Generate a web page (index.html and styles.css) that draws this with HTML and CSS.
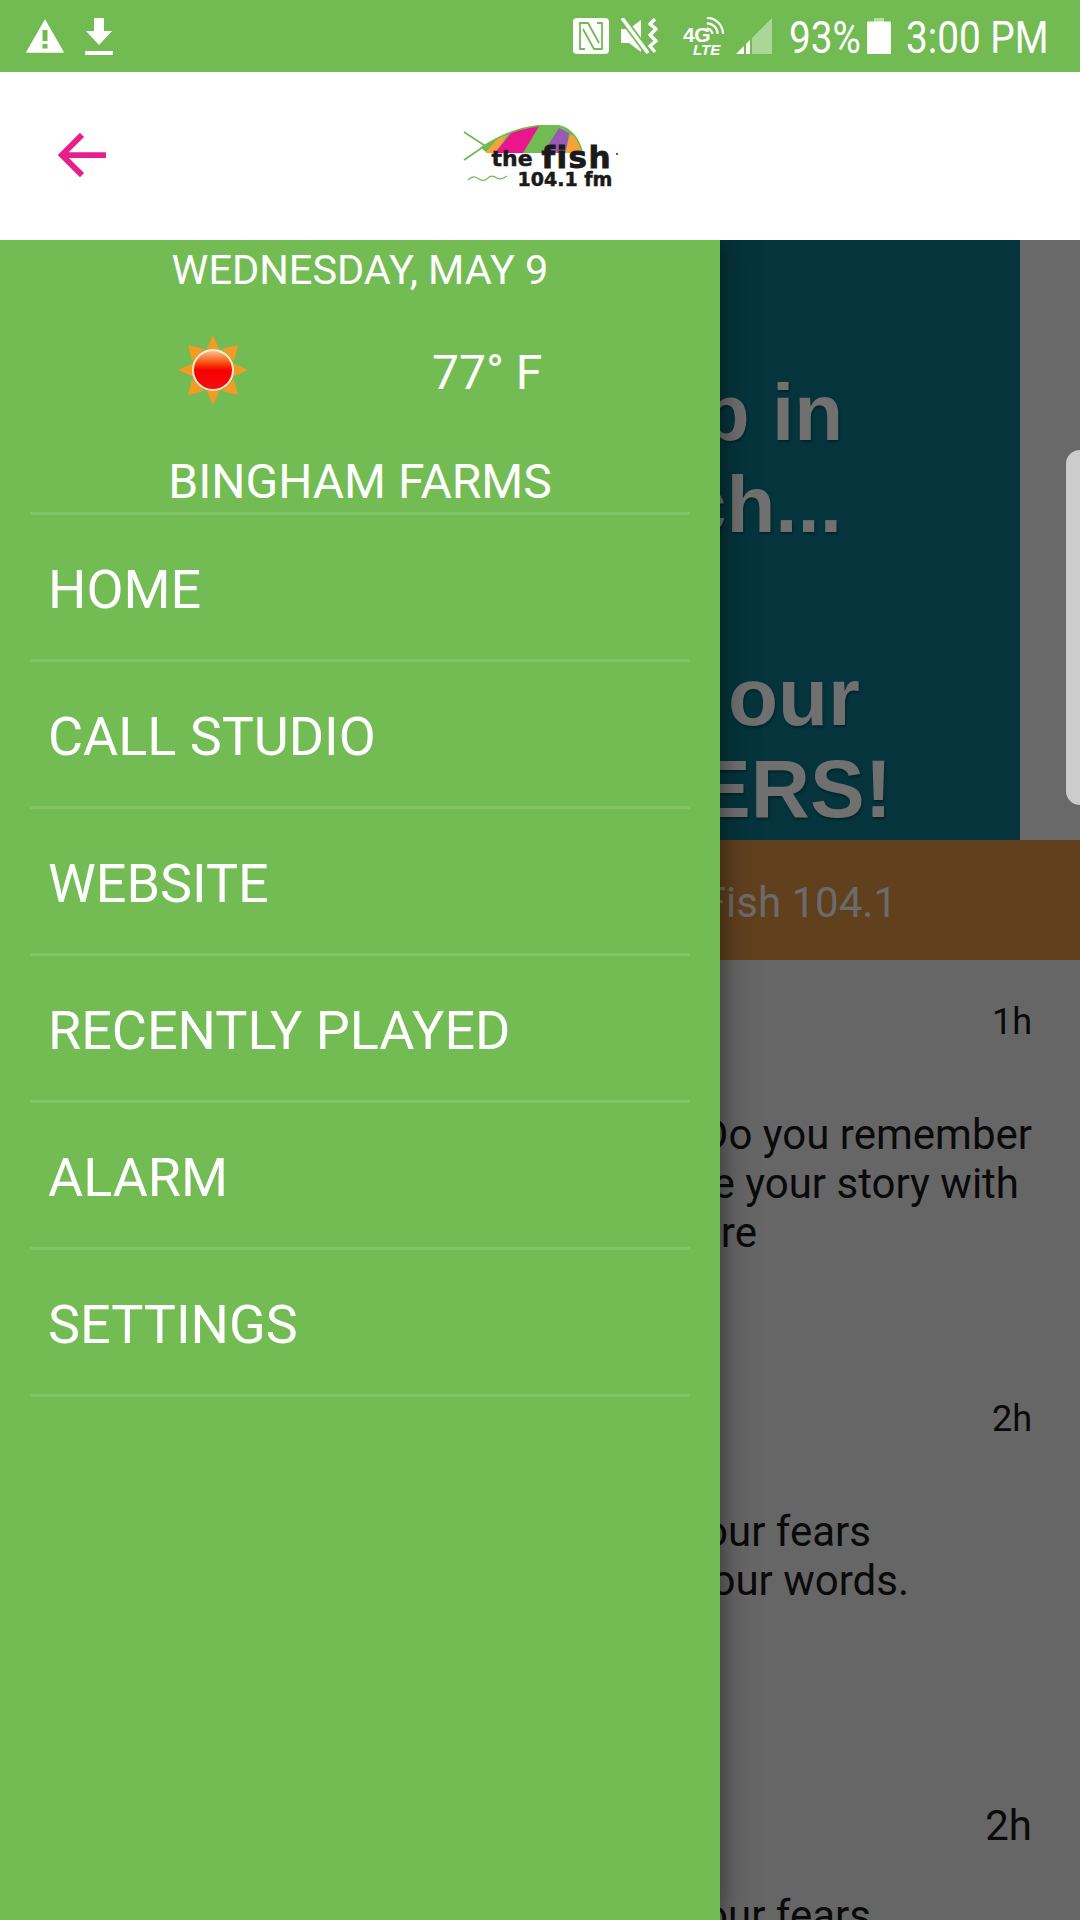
FILE: index.html
```html
<!DOCTYPE html>
<html lang="en">
<head>
<meta charset="utf-8">
<title>The Fish 104.1</title>
<link rel="stylesheet" href="styles.css">
</head>
<body>
<div class="phone">
  <header class="status">
    <div class="status-left">
      <svg class="ic-warn" viewBox="0 0 38 34"><path d="M19 1.5 L37 33 H1 Z" fill="#fff" stroke="#fff" stroke-width="1.5" stroke-linejoin="round"/><rect x="16.5" y="11" width="5" height="11" fill="#72bb53"/><rect x="16.5" y="25" width="5" height="4.5" fill="#72bb53"/></svg>
      <svg class="ic-dl" viewBox="0 0 28 37"><path d="M9 0h10v13h8L14 27 1 13h8z" fill="#fff"/><rect x="0" y="33" width="28" height="4" fill="#fff"/></svg>
    </div>
    <div class="status-right">
      <svg class="ic-nfc" viewBox="0 0 36 36"><rect width="36" height="36" rx="4" fill="#fff"/><path d="M12 31H7V5h8l11 20M24 5h5v26h-8L10 11" fill="none" stroke="#72bb53" stroke-width="1.8"/></svg>
      <svg class="ic-mute" viewBox="0 0 38 36"><path d="M0 11h8L20 2v32L8 25H0z" fill="#fff"/><path d="M1 0 L27 35" stroke="#72bb53" stroke-width="7"/><path d="M1 0 L27 35" stroke="#fff" stroke-width="3.6"/><path d="M34 1 l-5 5 6 5 -6 6 6 6 -6 5 5 6" fill="none" stroke="#fff" stroke-width="3.4" stroke-linejoin="round"/></svg>
      <div class="net">
        <svg class="ic-arcs" viewBox="0 0 20 20"><path d="M1 1 A18 18 0 0 1 19 19M1 7 A12 12 0 0 1 13 19M1 13 A6 6 0 0 1 7 19" fill="none" stroke="#fff" stroke-width="2.4"/></svg>
        <span class="net-4g">4G</span><span class="net-lte">LTE</span>
      </div>
      <svg class="ic-signal" viewBox="0 0 36 36"><path d="M16 20 36 0V36H16z" fill="#fff" fill-opacity=".4"/><path d="M0 36 8 28V36zM10 26 14 22V36H10z" fill="#fff"/></svg>
      <span class="status-text pct">93%</span>
      <svg class="ic-batt" viewBox="0 0 24 36"><path d="M7 0h10v4H7z" fill="#fff" fill-opacity=".5"/><rect y="3.5" width="24" height="32.5" rx="1" fill="#fff"/></svg>
      <span class="status-text clock">3:00 PM</span>
    </div>
  </header>
  <div class="appbar">
    <svg class="ic-back" viewBox="0 0 50 48"><path d="M50 24H5M25 3 4 24l21 21" fill="none" stroke="#e91e8c" stroke-width="6"/></svg>
    <div class="logo">
      <svg class="fish" viewBox="0 0 155 62">
        <defs><clipPath id="body"><path d="M18 23C40 8 64 0 88 0c16 0 26 9 31 28H24z"/></clipPath></defs>
        <path d="M1 7 30 26M1 35 20 22" fill="none" stroke="#72bb53" stroke-width="1.8"/>
        <g clip-path="url(#body)">
          <rect width="155" height="62" fill="#72bb53"/>
          <path d="M22 28 36 12 44 10 32 28z" fill="#f7a13a"/>
          <path d="M32 28 48 8 78 -2 60 28z" fill="#ec168c"/>
          <path d="M80 28 96 3 106 8 103 28z" fill="#9b59b6"/>
          <path d="M102 28 107 10 118 12 120 28z" fill="#f7a13a"/>
        </g>
        <path d="M18 23C40 8 64 0 88 0c16 0 26 9 31 26" fill="none" stroke="#72bb53" stroke-width="1.6"/>
        <path d="M5 55c5-5 8-3 11-1s6 2 9-1 6-2 9 0 6 1 10-2" fill="none" stroke="#72bb53" stroke-width="1.2"/>
        <circle cx="154" cy="29" r=".9" fill="#1a1a1a"/>
      </svg>
      <span class="logo-the">the</span><span class="logo-fish">fish</span><span class="logo-freq">104.1 fm</span>
    </div>
  </div>
  <main class="content">
    <section class="hero">
      <div class="hero-image">
        <span class="hl hl-1">Hop in</span>
        <span class="hl hl-2">Reach...</span>
        <span class="hl hl-3">our</span>
        <span class="hl hl-4">LISTENERS!</span>
      </div>
      <div class="hero-side"><div class="edge-handle"></div></div>
    </section>
    <div class="band"><span>The Fish 104.1</span></div>
    <article class="post post-a">
      <div class="age">1h</div>
      <p><span class="ln ln-a1">Do you remember</span><span class="ln ln-a2">share your story with</span><span class="ln ln-a3">here</span></p>
    </article>
    <article class="post post-b">
      <div class="age">2h</div>
      <p><span class="ln ln-b1">your fears</span><span class="ln ln-b2">your words.</span></p>
    </article>
    <article class="post post-c">
      <div class="age age-lg">2h</div>
      <p><span class="ln ln-b1">your fears</span></p>
    </article>
  </main>
  <nav class="drawer">
    <div class="date">WEDNESDAY, MAY 9</div>
    <div class="weather">
      <svg class="sun" viewBox="0 0 70 70">
        <defs><linearGradient id="sunfill" x1="0" y1="0" x2="0" y2="1"><stop offset="0" stop-color="#f8c9a0"/><stop offset=".3" stop-color="#f8590f"/><stop offset=".5" stop-color="#f80000"/><stop offset="1" stop-color="#f41010"/></linearGradient></defs>
        <g fill="#f59a22">
          <path d="M35 0 42 16H28zM35 70 42 54H28zM0 35 16 28V42zM70 35 54 28V42z"/>
          <path d="M10 10 26 14 14 26zM60 10 44 14 56 26zM10 60 26 56 14 44zM60 60 44 56 56 44z"/>
        </g>
        <circle cx="35" cy="35" r="21" fill="#f59a22"/>
        <circle cx="35" cy="35" r="20" fill="url(#sunfill)" stroke="#f7ead2" stroke-width="2"/>
      </svg>
      <span class="temp">77° F</span>
    </div>
    <div class="city">BINGHAM FARMS</div>
    <ul class="menu">
      <li>HOME</li>
      <li>CALL STUDIO</li>
      <li>WEBSITE</li>
      <li>RECENTLY PLAYED</li>
      <li>ALARM</li>
      <li>SETTINGS</li>
    </ul>
  </nav>
</div>
</body>
</html>
```
FILE: styles.css
```css
* { box-sizing: border-box; }
html, body { margin: 0; padding: 0; }
body { font-family: Roboto, "Liberation Sans", sans-serif; background: #666; }
.phone { position: relative; width: 1080px; height: 1920px; overflow: hidden; display: flex; flex-direction: column; }

.status { height: 72px; background: #72bb53; display: flex; justify-content: space-between; align-items: center; padding: 0 32px 0 26px; color: #fff; flex: none; }
.status-left, .status-right { display: flex; align-items: center; }
.ic-warn { width: 38px; height: 34px; }
.ic-dl { width: 28px; height: 37px; margin-left: 21px; }
.ic-nfc { width: 36px; height: 36px; }
.ic-mute { width: 38px; height: 36px; margin-left: 12px; }
.net { position: relative; width: 41px; height: 39px; margin-left: 24px; }
.ic-arcs { position: absolute; right: 0; top: 0; width: 18px; height: 18px; }
.net-4g { position: absolute; left: 0; top: 10px; font: 700 21px/16px "Liberation Sans", sans-serif; letter-spacing: -.5px; }
.net-lte { position: absolute; left: 10px; top: 27px; font: italic 700 15px/12px "Liberation Sans", sans-serif; }
.ic-signal { width: 36px; height: 36px; margin-left: 12px; }
.status-text { display: block; font-size: 44px; line-height: 64px; margin-top: 4px; font-weight: 400; white-space: nowrap; transform: scaleX(.88); transform-origin: left center; }
.pct { width: 69px; margin-left: 17px; }
.clock { width: 142px; }
.ic-batt { width: 24px; height: 36px; margin: 0 15px 0 9px; }

.appbar { position: relative; height: 168px; background: #fff; flex: none; z-index: 3; display: flex; align-items: center; justify-content: center; }
.ic-back { position: absolute; left: 58px; top: 60px; width: 48px; height: 46px; }
.logo { position: relative; width: 155px; height: 62px; color: #1a1a1a; }
.fish { position: absolute; left: 0; top: 0; width: 155px; height: 62px; }
.logo-the, .logo-fish, .logo-freq { position: absolute; font-family: "DejaVu Sans", sans-serif; font-weight: 700; white-space: nowrap; -webkit-text-stroke: .5px #1a1a1a; }
.logo-the { left: 29px; top: 23px; font-size: 22px; line-height: 22px; }
.logo-fish { left: 79px; top: 18px; font-size: 31px; line-height: 28px; letter-spacing: 1.5px; -webkit-text-stroke: .9px #1a1a1a; }
.logo-freq { left: 55px; top: 46px; font-size: 19px; line-height: 16px; }

.content { flex: 1; display: flex; flex-direction: column; background: #666; }
.hero { height: 600px; display: flex; flex: none; }
.hero-image { width: 1020px; background: #05343c; flex: none; overflow: hidden; display: flex; flex-direction: column; align-items: flex-end; padding-top: 127px; }
.hl { display: block; font: 700 80px/92px "Liberation Sans", sans-serif; color: #707070; white-space: nowrap; text-shadow: 1px 2px 2px #03252b; }
.hl-1 { margin-right: 177px; }
.hl-2 { margin-right: 178px; }
.hl-3 { margin-top: 100px; margin-right: 160px; font-size: 82px; }
.hl-4 { margin-right: 128px; font-size: 82px; }
.hero-side { flex: 1; background: #696969; position: relative; }
.edge-handle { position: absolute; left: 46px; top: 210px; width: 30px; height: 355px; background: #ccc; border-radius: 14px 0 0 14px; }

.band { height: 120px; background: #61401e; color: #6b6b6b; font-size: 42px; line-height: 112px; padding-top: 7px; flex: none; text-align: right; padding-right: 183px; }

.post { padding-right: 48px; }
.age { text-align: right; font-size: 36px; line-height: 40px; color: #0a0a0a; }
.age-lg { font-size: 42px; line-height: 48px; }
.post p { margin: 0; font-size: 42px; line-height: 49px; color: #0a0a0a; white-space: nowrap; }
.ln { display: block; text-align: right; }
.ln-a2 { margin-right: 13px; }
.ln-a3 { margin-right: 275px; }
.ln-b1 { margin-right: 161px; }
.ln-b2 { margin-right: 123px; }
.post-a { height: 397px; padding-top: 42px; }
.post-a p { margin-top: 68px; }
.post-b { height: 406px; padding-top: 42px; }
.post-b p { margin-top: 68px; }
.post-c { padding-top: 39px; }
.post-c p { margin-top: 41px; }

.drawer { position: absolute; left: 0; top: 240px; width: 720px; bottom: 0; background: #73bc54; color: #fff; box-shadow: 0 0 28px rgba(0,0,0,.55); z-index: 2; text-align: center; }
.date { font-size: 41.5px; line-height: 46px; padding-top: 7px; }
.weather { display: flex; align-items: center; margin-top: 42px; }
.sun { width: 70px; height: 70px; margin-left: 178px; flex: none; }
.temp { font-size: 48px; font-weight: 400; margin-left: 184px; margin-top: 5px; }
.city { font-size: 48px; line-height: 52px; margin-top: 51px; }
.menu { list-style: none; margin: 4px 30px 0; padding: 0; border-top: 3px solid #83c566; }
.menu li { height: 147px; border-bottom: 3px solid #83c566; font-size: 53.9px; line-height: 143px; padding-top: 3px; text-align: left; padding-left: 18px; }
```
